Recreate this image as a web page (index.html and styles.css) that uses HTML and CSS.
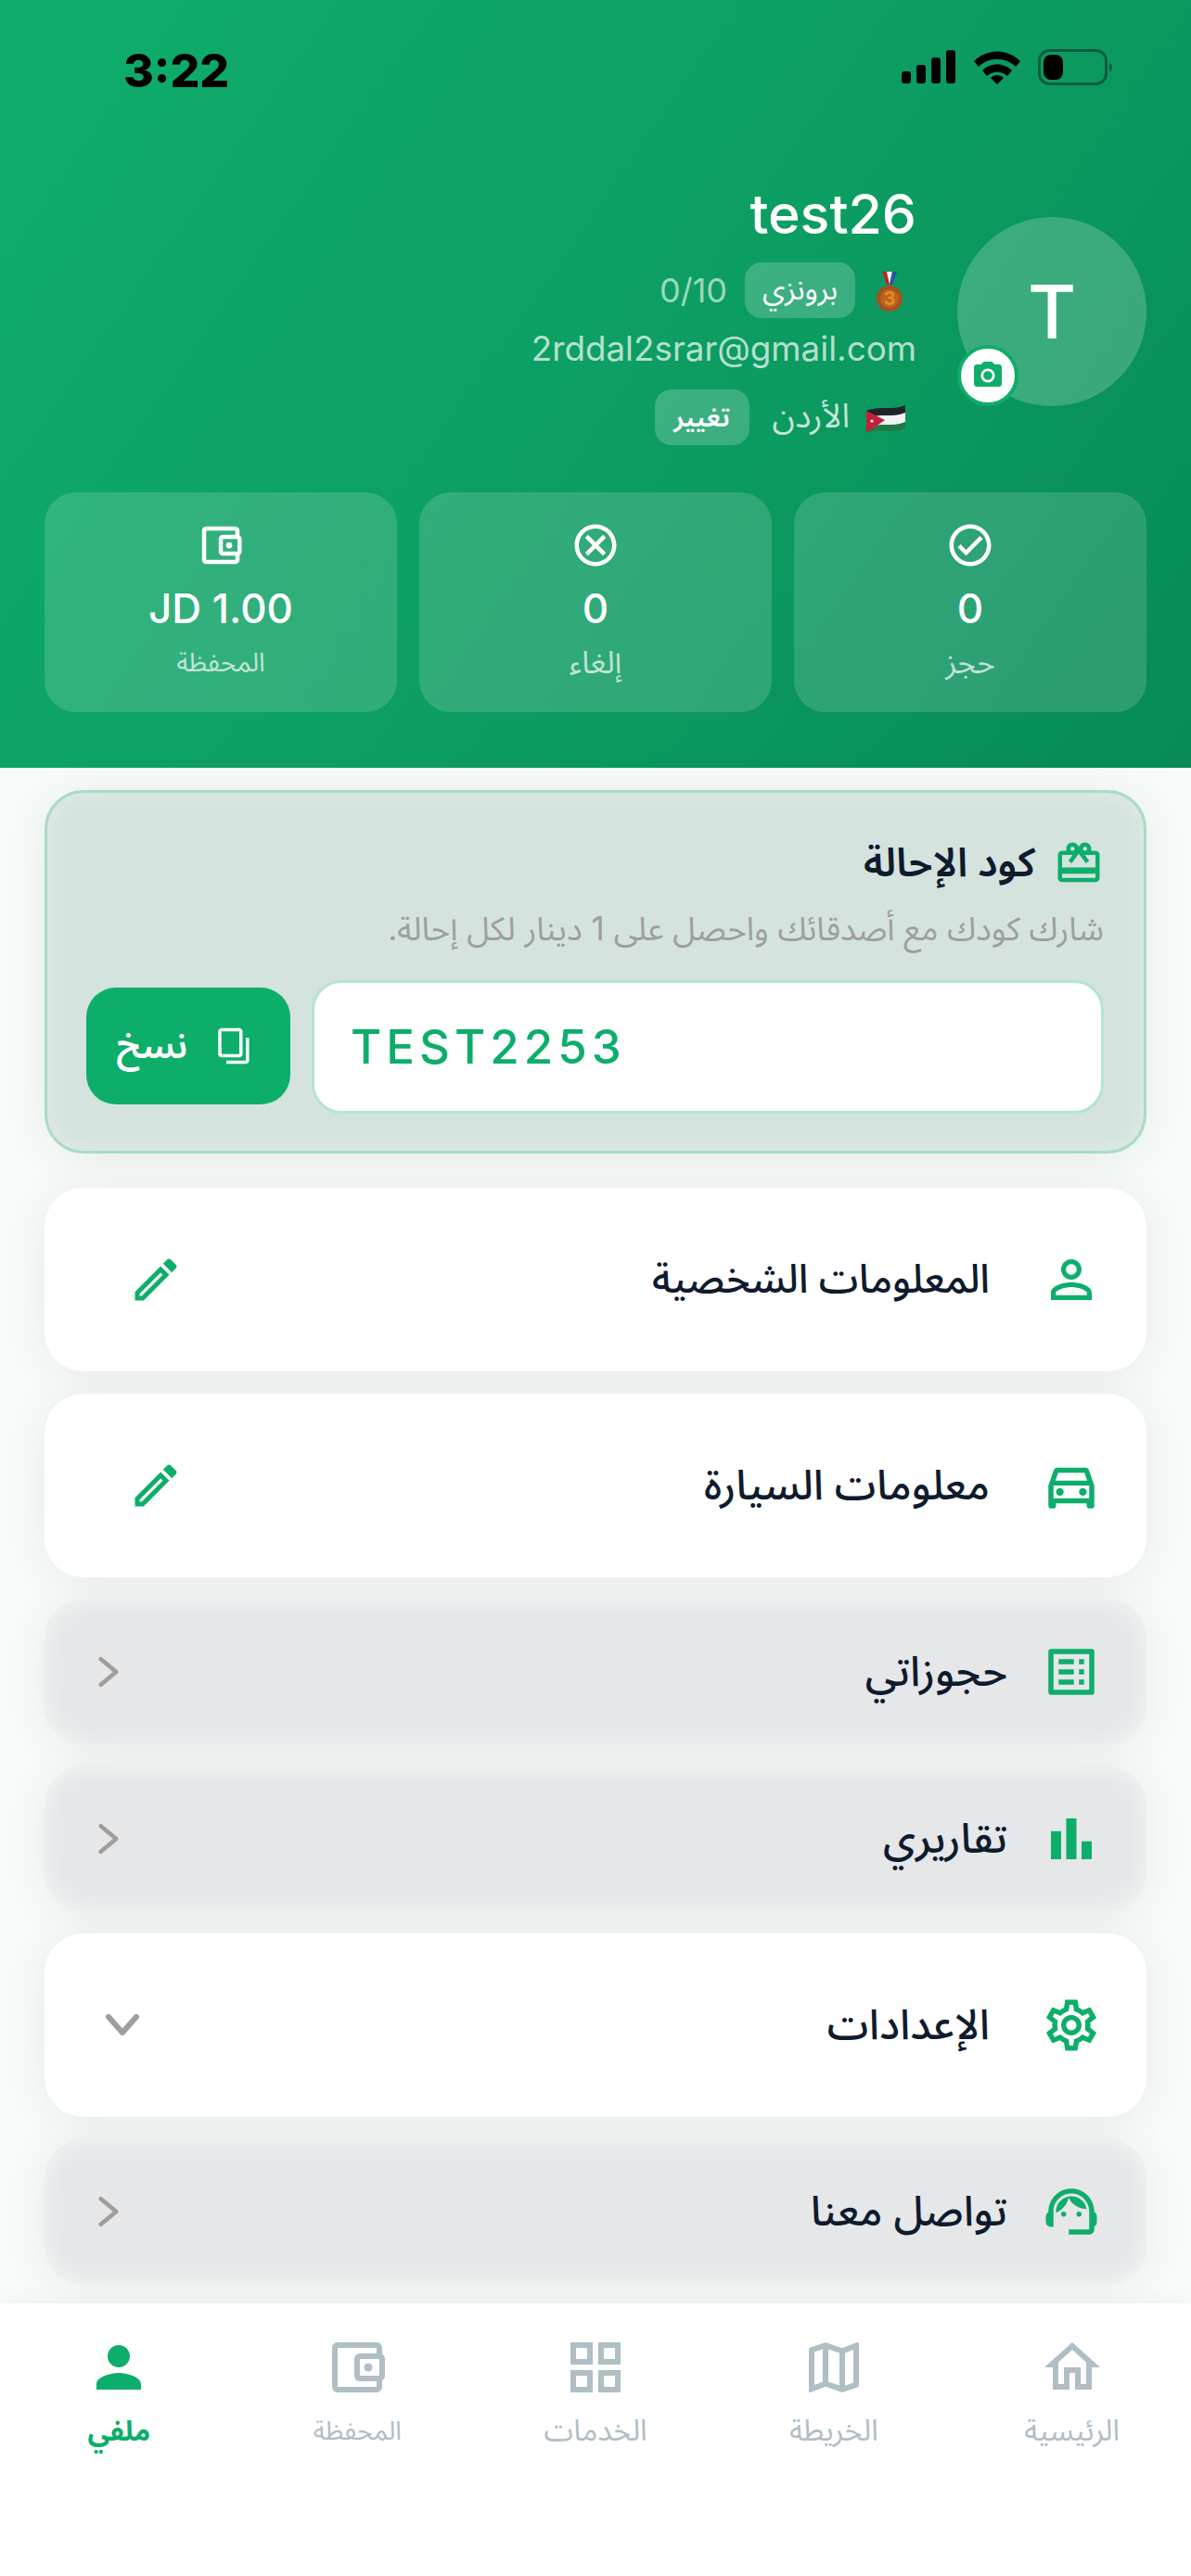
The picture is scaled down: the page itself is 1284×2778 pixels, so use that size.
FILE: index.html
```html
<!DOCTYPE html>
<html lang="ar" dir="rtl">
<head>
    <meta charset="UTF-8">
    <meta name="viewport" content="width=device-width, initial-scale=1.0">
    <title>ملفي</title>
    <link rel="stylesheet" href="styles.css">
</head>
<body>
    <div class="app">
        <div class="scroll">
            <header class="hero">
                <div class="status" dir="ltr">
                    <span class="time">3:22</span>
                    <svg class="status-icons" viewBox="0 0 230 39" width="230" height="39">
                        <rect x="0" y="24" width="10" height="13" rx="3"/>
                        <rect x="16" y="17" width="10" height="20" rx="3"/>
                        <rect x="32" y="9" width="10" height="28" rx="3"/>
                        <rect x="48" y="1" width="10" height="36" rx="3"/>
                        <path d="M78 13 C92 -1 114 -1 128 13 L123 19 C112 8 94 8 83 19Z"/>
                        <path d="M87 23 C96 14 110 14 119 23 L114 29 C107 23 99 23 92 29Z"/>
                        <path d="M96 31 C100 27 106 27 110 31 L103 38Z"/>
                        <rect x="148.5" y="1.5" width="72" height="36" rx="11" fill="none" stroke="#0a5c3e" stroke-width="3"/>
                        <rect x="153" y="6" width="21" height="27" rx="8"/>
                        <path d="M224 15 C228 16 228 23 224 24Z" fill="#0a5c3e"/>
                    </svg>
                </div>

                <div class="profile">
                    <div class="avatar">
                        <span>T</span>
                        <div class="camera">
                            <svg viewBox="0 0 24 24" width="36" height="36"><path d="M12 15.2a3.2 3.2 0 1 0 0-6.4 3.2 3.2 0 0 0 0 6.4z"/><path d="M9 2 7.17 4H4c-1.1 0-2 .9-2 2v12c0 1.1.9 2 2 2h16c1.1 0 2-.9 2-2V6c0-1.1-.9-2-2-2h-3.17L15 2H9zm3 15c-2.76 0-5-2.24-5-5s2.24-5 5-5 5 2.24 5 5-2.24 5-5 5z"/></svg>
                        </div>
                    </div>
                    <div class="info">
                        <div class="name" dir="ltr">test26</div>
                        <div class="level">
                            <svg class="medal" viewBox="0 0 28 44" width="28" height="44">
                                <path d="M6 0h5l3 14h-3z" fill="#c8202f"/>
                                <path d="M11 0h6l-3 14z" fill="#f4f4f4"/>
                                <path d="M17 0h5l-5 14h-3z" fill="#2b4fa8"/>
                                <circle cx="14" cy="29" r="14" fill="#a5521c"/>
                                <circle cx="14" cy="29" r="10" fill="#b9651f"/>
                                <text x="14" y="36" class="medal-num">3</text>
                            </svg>
                            <span class="pill pill-level">برونزي</span>
                            <span class="points" dir="ltr">0/10</span>
                        </div>
                        <div class="email" dir="ltr">2rddal2srar@gmail.com</div>
                        <div class="country">
                            <svg class="flag" viewBox="0 0 42 30" width="42" height="30">
                                <path d="M0 6 C14 0 28 6 42 0 V10 C28 16 14 10 0 16Z" fill="#20242a"/>
                                <path d="M0 14 C14 8 28 14 42 8 V20 C28 26 14 20 0 26Z" fill="#f2f2f2"/>
                                <path d="M0 24 C14 18 28 24 42 18 V25 C28 31 14 24 0 30Z" fill="#1f7a45"/>
                                <path d="M0 6 L20 16 L0 30Z" fill="#c4203a"/>
                                <circle cx="6" cy="17" r="1.6" fill="#fff"/>
                            </svg>
                            <span class="country-name">الأردن</span>
                            <span class="pill pill-change">تغيير</span>
                        </div>
                    </div>
                </div>

                <div class="stats">
                    <div class="stat">
                        <svg viewBox="0 0 24 24" width="54" height="54"><path d="M12 2C6.48 2 2 6.48 2 12s4.48 10 10 10 10-4.48 10-10S17.52 2 12 2zm0 18c-4.41 0-8-3.59-8-8s3.59-8 8-8 8 3.59 8 8-3.59 8-8 8zm4.59-12.42L10 14.17l-2.59-2.58L6 13l4 4 8-8z"/></svg>
                        <div class="stat-value">0</div>
                        <div class="stat-label">حجز</div>
                    </div>
                    <div class="stat">
                        <svg viewBox="0 0 24 24" width="54" height="54"><path d="M12 2C6.47 2 2 6.47 2 12s4.47 10 10 10 10-4.47 10-10S17.53 2 12 2zm0 18c-4.41 0-8-3.59-8-8s3.59-8 8-8 8 3.59 8 8-3.59 8-8 8zm3.59-13L12 10.59 8.41 7 7 8.41 10.59 12 7 15.59 8.41 17 12 13.41 15.59 17 17 15.59 13.41 12 17 8.41z"/></svg>
                        <div class="stat-value">0</div>
                        <div class="stat-label">إلغاء</div>
                    </div>
                    <div class="stat">
                        <svg viewBox="0 0 24 24" width="54" height="54"><path d="M21 7.28V5c0-1.1-.9-2-2-2H5c-1.11 0-2 .9-2 2v14c0 1.1.89 2 2 2h14c1.1 0 2-.9 2-2v-2.28c.59-.35 1-.98 1-1.72V9c0-.74-.41-1.37-1-1.72zM20 9v6h-7V9h7zM5 19V5h14v2h-6c-1.1 0-2 .9-2 2v6c0 1.1.9 2 2 2h6v2H5z"/><circle cx="16" cy="12" r="1.5"/></svg>
                        <div class="stat-value" dir="ltr">JD 1.00</div>
                        <div class="stat-label tight">المحفظة</div>
                    </div>
                </div>
            </header>

            <main class="content">
                <section class="referral">
                    <div class="referral-title">
                        <svg viewBox="0 0 24 24" width="54" height="54"><path d="M20 6h-2.18c.11-.31.18-.65.18-1 0-1.66-1.34-3-3-3-1.05 0-1.96.54-2.5 1.35l-.5.67-.5-.68C10.96 2.54 10.05 2 9 2 7.34 2 6 3.34 6 5c0 .35.07.69.18 1H4c-1.11 0-1.99.89-1.99 2L2 19c0 1.11.89 2 2 2h16c1.11 0 2-.89 2-2V8c0-1.11-.89-2-2-2zm-5-2c.55 0 1 .45 1 1s-.45 1-1 1-1-.45-1-1 .45-1 1-1zM9 4c.55 0 1 .45 1 1s-.45 1-1 1-1-.45-1-1 .45-1 1-1zm11 15H4v-2h16v2zm0-5H4V8h5.08L7 10.83 8.62 12 11 8.76l1-1.36 1 1.36L15.38 12 17 10.83 14.92 8H20v6z"/></svg>
                        <span>كود الإحالة</span>
                    </div>
                    <p class="referral-text">شارك كودك مع أصدقائك واحصل على 1 دينار لكل إحالة.</p>
                    <div class="referral-row">
                        <div class="code" dir="ltr">TEST2253</div>
                        <button class="copy" type="button">
                            <svg class="flip" viewBox="0 0 24 24" width="42" height="42"><path d="M16 1H4c-1.1 0-2 .9-2 2v14h2V3h12V1zm3 4H8c-1.1 0-2 .9-2 2v14c0 1.1.9 2 2 2h11c1.1 0 2-.9 2-2V7c0-1.1-.9-2-2-2zm0 16H8V7h11v14z"/></svg>
                            <span>نسخ</span>
                        </button>
                    </div>
                </section>

                <div class="menu">
                    <div class="row row-open">
                        <svg class="row-icon" viewBox="0 0 24 24"><path d="M12 5.9c1.16 0 2.1.94 2.1 2.1s-.94 2.1-2.1 2.1S9.9 9.16 9.9 8s.94-2.1 2.1-2.1m0 9c2.97 0 6.1 1.46 6.1 2.1v1.1H5.9V17c0-.64 3.13-2.1 6.1-2.1M12 4C9.79 4 8 5.79 8 8s1.79 4 4 4 4-1.79 4-4-1.79-4-4-4zm0 9c-2.67 0-8 1.34-8 4v3h16v-3c0-2.66-5.33-4-8-4z"/></svg>
                        <span class="row-text tight-row">المعلومات الشخصية</span>
                        <svg class="row-edit" viewBox="0 0 24 24"><path d="M14.06 9.02l.92.92L5.92 19H5v-.92l9.06-9.06M17.66 3c-.25 0-.51.1-.7.29l-1.83 1.83 3.75 3.75 1.83-1.83c.39-.39.39-1.02 0-1.41l-2.34-2.34c-.2-.2-.45-.29-.71-.29zm-3.6 3.19L3 17.25V21h3.75L17.81 9.94l-3.75-3.75z"/></svg>
                    </div>
                    <div class="row row-open">
                        <svg class="row-icon" viewBox="0 0 24 24"><path d="M18.92 6.01C18.72 5.42 18.16 5 17.5 5h-11c-.66 0-1.21.42-1.42 1.01L3 12v8c0 .55.45 1 1 1h1c.55 0 1-.45 1-1v-1h12v1c0 .55.45 1 1 1h1c.55 0 1-.45 1-1v-8l-2.08-5.99zM6.85 7h10.29l1.08 3.11H5.77L6.85 7zM19 17H5v-5h14v5z"/><circle cx="7.5" cy="14.5" r="1.5"/><circle cx="16.5" cy="14.5" r="1.5"/></svg>
                        <span class="row-text">معلومات السيارة</span>
                        <svg class="row-edit" viewBox="0 0 24 24"><path d="M14.06 9.02l.92.92L5.92 19H5v-.92l9.06-9.06M17.66 3c-.25 0-.51.1-.7.29l-1.83 1.83 3.75 3.75 1.83-1.83c.39-.39.39-1.02 0-1.41l-2.34-2.34c-.2-.2-.45-.29-.71-.29zm-3.6 3.19L3 17.25V21h3.75L17.81 9.94l-3.75-3.75z"/></svg>
                    </div>
                    <div class="row row-gray">
                        <svg class="row-icon mirror" viewBox="0 0 24 24"><path d="M19 5v14H5V5h14m1.1-2H3.9c-.5 0-.9.4-.9.9v16.2c0 .4.4.9.9.9h16.2c.4 0 .9-.5.9-.9V3.9c0-.5-.5-.9-.9-.9zM11 7h6v2h-6V7zm0 4h6v2h-6v-2zm0 4h6v2h-6zM7 7h2v2H7zm0 4h2v2H7zm0 4h2v2H7z"/></svg>
                        <span class="row-text">حجوزاتي</span>
                        <svg class="chevron" viewBox="0 0 24 36"><path d="M3 3 L21 18 L3 33"/></svg>
                    </div>
                    <div class="row row-gray">
                        <svg class="row-icon" viewBox="0 0 24 24"><path d="M4 9h4v11H4zM16 13h4v7h-4zM10 4h4v16h-4z"/></svg>
                        <span class="row-text">تقاريري</span>
                        <svg class="chevron" viewBox="0 0 24 36"><path d="M3 3 L21 18 L3 33"/></svg>
                    </div>
                    <div class="row row-open row-settings">
                        <svg class="row-icon" viewBox="0 0 24 24"><path d="M19.43 12.98c.04-.32.07-.64.07-.98 0-.34-.03-.66-.07-.98l2.11-1.65c.19-.15.24-.42.12-.64l-2-3.46c-.09-.16-.26-.25-.44-.25-.06 0-.12.01-.17.03l-2.49 1c-.52-.4-1.08-.73-1.69-.98l-.38-2.65C14.46 2.18 14.25 2 14 2h-4c-.25 0-.46.18-.49.42l-.38 2.65c-.61.25-1.17.59-1.69.98l-2.49-1c-.06-.02-.12-.03-.18-.03-.17 0-.34.09-.43.25l-2 3.46c-.13.22-.07.49.12.64l2.11 1.65c-.04.32-.07.65-.07.98 0 .33.03.66.07.98l-2.11 1.65c-.19.15-.24.42-.12.64l2 3.46c.09.16.26.25.44.25.06 0 .12-.01.17-.03l2.49-1c.52.4 1.08.73 1.69.98l.38 2.65c.03.24.24.42.49.42h4c.25 0 .46-.18.49-.42l.38-2.65c.61-.25 1.17-.59 1.69-.98l2.49 1c.06.02.12.03.18.03.17 0 .34-.09.43-.25l2-3.46c.12-.22.07-.49-.12-.64l-2.11-1.65zm-1.98-1.71c.04.31.05.52.05.73 0 .21-.02.43-.05.73l-.14 1.13.89.7 1.08.84-.7 1.21-1.27-.51-1.04-.42-.9.68c-.43.32-.84.56-1.25.73l-1.06.43-.16 1.13-.2 1.35h-1.4l-.19-1.35-.16-1.13-1.06-.43c-.43-.18-.83-.41-1.23-.71l-.91-.7-1.06.43-1.27.51-.7-1.21 1.08-.84.89-.7-.14-1.13c-.03-.31-.05-.54-.05-.74s.02-.43.05-.73l.14-1.13-.89-.7-1.08-.84.7-1.21 1.27.51 1.04.42.9-.68c.43-.32.84-.56 1.25-.73l1.06-.43.16-1.13.2-1.35h1.39l.19 1.35.16 1.13 1.06.43c.43.18.83.41 1.23.71l.91.7 1.06-.43 1.27-.51.7 1.21-1.07.85-.89.7.14 1.13zM12 8c-2.21 0-4 1.79-4 4s1.79 4 4 4 4-1.79 4-4-1.79-4-4-4zm0 6c-1.1 0-2-.9-2-2s.9-2 2-2 2 .9 2 2-.9 2-2 2z"/></svg>
                        <span class="row-text">الإعدادات</span>
                        <svg class="chevron-down" viewBox="0 0 36 24"><path d="M3 3 L18 20 L33 3"/></svg>
                    </div>
                    <div class="row row-gray">
                        <svg class="row-icon" viewBox="0 0 24 24"><path d="M21 12.22C21 6.73 16.74 3 12 3c-4.69 0-9 3.65-9 9.28-.6.34-1 .98-1 1.72v2c0 1.1.9 2 2 2h1v-6.1c0-3.87 3.13-7 7-7s7 3.13 7 7V19h-8v2h8c1.1 0 2-.9 2-2v-1.22c.59-.31 1-.92 1-1.64v-2.3c0-.7-.41-1.31-1-1.62z"/><circle cx="9" cy="13" r="1"/><circle cx="15" cy="13" r="1"/><path d="M18 11.03C17.52 8.18 15.04 6 12.05 6c-3.03 0-6.29 2.51-6.03 6.45 2.47-1.01 4.33-3.21 4.86-5.89 1.31 2.63 4 4.44 7.12 4.47z"/></svg>
                        <span class="row-text">تواصل معنا</span>
                        <svg class="chevron" viewBox="0 0 24 36"><path d="M3 3 L21 18 L3 33"/></svg>
                    </div>
                </div>
            </main>
        </div>

        <nav class="tabbar">
            <a class="tab">
                <svg viewBox="0 0 24 24"><path d="M12 5.69l5 4.5V18h-2v-6H9v6H7v-7.81l5-4.5M12 3 2 12h3v8h6v-6h2v6h6v-8h3L12 3z"/></svg>
                <span>الرئيسية</span>
            </a>
            <a class="tab">
                <svg viewBox="0 0 24 24"><path d="M20.5 3l-.16.03L15 5.1 9 3 3.36 4.9c-.21.07-.36.25-.36.48V20.5c0 .28.22.5.5.5l.16-.03L9 18.9l6 2.1 5.64-1.9c.21-.07.36-.25.36-.48V3.5c0-.28-.22-.5-.5-.5zM10 5.47l4 1.4v11.66l-4-1.4V5.47zm-5 .99l3-1.01v11.7l-3 1.16V6.46zm14 11.08l-3 1.01V6.86l3-1.16v11.84z"/></svg>
                <span>الخريطة</span>
            </a>
            <a class="tab">
                <svg viewBox="0 0 24 24"><path d="M3 3v8h8V3H3zm6 6H5V5h4v4zm-6 4v8h8v-8H3zm6 6H5v-4h4v4zm4-16v8h8V3h-8zm6 6h-4V5h4v4zm-6 4v8h8v-8h-8zm6 6h-4v-4h4v4z"/></svg>
                <span>الخدمات</span>
            </a>
            <a class="tab">
                <svg viewBox="0 0 24 24"><path d="M21 7.28V5c0-1.1-.9-2-2-2H5c-1.11 0-2 .9-2 2v14c0 1.1.89 2 2 2h14c1.1 0 2-.9 2-2v-2.28c.59-.35 1-.98 1-1.72V9c0-.74-.41-1.37-1-1.72zM20 9v6h-7V9h7zM5 19V5h14v2h-6c-1.1 0-2 .9-2 2v6c0 1.1.9 2 2 2h6v2H5z"/><circle cx="16" cy="12" r="1.5"/></svg>
                <span class="tight">المحفظة</span>
            </a>
            <a class="tab tab-active">
                <svg viewBox="0 0 24 24"><path d="M12 12c2.21 0 4-1.79 4-4s-1.79-4-4-4-4 1.79-4 4 1.79 4 4 4zm0 2c-2.67 0-8 1.34-8 4v2h16v-2c0-2.66-5.33-4-8-4z"/></svg>
                <span>ملفي</span>
            </a>
        </nav>
    </div>
</body>
</html>
```

FILE: styles.css
```css
* {
    box-sizing: border-box;
}

body {
    margin: 0;
    font-family: Inter, "Noto Sans Arabic", "Noto Sans", "DejaVu Sans", sans-serif;
    color: #0f1b2d;
    background: #f7fbf9;
}

.app {
    width: 1284px;
    height: 2778px;
    display: flex;
    flex-direction: column;
    overflow: hidden;
}

.scroll {
    flex: 1;
    min-height: 0;
    overflow: hidden;
}

/* Шапка */
.hero {
    height: 828px;
    padding: 0 48px;
    background: linear-gradient(125deg, #0fae6c 0%, #0c9c61 58%, #078a58 100%);
    color: #fff;
}

.status {
    height: 191px;
    padding: 46px 34px 0 85px;
    display: flex;
    justify-content: space-between;
    align-items: flex-start;
    color: #000;
}

.time {
    font-size: 50px;
    line-height: 60px;
    font-weight: 800;
}

.status-icons {
    margin-top: 7px;
    fill: #000;
}

.profile {
    display: flex;
    align-items: center;
    gap: 44px;
}

.avatar {
    position: relative;
    flex: none;
    width: 204px;
    height: 204px;
    border-radius: 50%;
    background: rgba(255, 255, 255, 0.2);
    display: flex;
    align-items: center;
    justify-content: center;
    font-size: 80px;
    font-weight: 500;
}

.camera {
    position: absolute;
    left: 0;
    bottom: 0;
    width: 66px;
    height: 66px;
    border-radius: 50%;
    border: 4px solid #0dae6a;
    background: #fff;
    display: flex;
    align-items: center;
    justify-content: center;
    fill: #0dae6a;
}

.info {
    flex: 1;
    min-width: 0;
}

.name {
    height: 80px;
    line-height: 80px;
    font-size: 59px;
    font-weight: 500;
    text-align: right;
}

.level,
.country {
    height: 60px;
    display: flex;
    align-items: center;
    margin-top: 12px;
}

.medal {
    margin: 4px 15px 0 23px;
}

.medal-num {
    font-size: 20px;
    font-weight: 700;
    text-anchor: middle;
    fill: #e98a24;
}

.pill {
    height: 60px;
    border-radius: 18px;
    background: rgba(255, 255, 255, 0.2);
    display: flex;
    align-items: center;
    justify-content: center;
    font-size: 32px;
}

.pill-level {
    width: 119px;
}

.pill-change {
    width: 102px;
    font-size: 29px;
    font-weight: 600;
}

.points {
    margin-right: 19px;
    font-size: 36px;
    color: rgba(255, 255, 255, 0.6);
}

.email {
    height: 50px;
    margin-top: 8px;
    line-height: 50px;
    font-size: 36.8px;
    text-align: right;
    color: rgba(255, 255, 255, 0.7);
}

.country {
    margin-top: 19px;
}

.flag {
    margin: 4px 12px 0 18px;
}

.country-name {
    margin-left: 25px;
    font-size: 36px;
    color: rgba(255, 255, 255, 0.75);
}

.stats {
    display: grid;
    grid-template-columns: repeat(3, 1fr);
    gap: 24px;
    margin-top: 51px;
}

.stat {
    height: 237px;
    padding-top: 30px;
    border-radius: 34px;
    background: rgba(255, 255, 255, 0.15);
    display: flex;
    flex-direction: column;
    align-items: center;
    fill: #fff;
}

.stat-value {
    margin-top: 11px;
    height: 60px;
    line-height: 60px;
    font-size: 44px;
    font-weight: 500;
}

.stat-label {
    margin-top: 3px;
    height: 50px;
    line-height: 50px;
    font-size: 33px;
    color: rgba(255, 255, 255, 0.7);
}

/* слова с лигатурой "лям-мим" в оригинальном шрифте уже */
.tight {
    font-size: 28px;
}

/* Контент */
.content {
    padding: 24px 48px 0;
}

.referral {
    height: 392px;
    padding: 46px 43px 0 42px;
    border: 3px solid #a9dcc4;
    border-radius: 42px;
    background: #d4e3de;
    box-shadow: 0 4px 50px rgba(0, 40, 30, 0.07), inset 0 0 30px rgba(255, 255, 255, 0.3);
}

.referral-title {
    height: 60px;
    display: flex;
    align-items: center;
    gap: 20px;
    font-size: 43px;
    font-weight: 600;
    fill: #0dae6a;
}

.referral-text {
    margin: 15px 0 0;
    height: 50px;
    line-height: 50px;
    font-size: 35px;
    color: #9e9e9e;
}

.referral-row {
    margin-top: 31px;
    display: flex;
    align-items: center;
    gap: 23px;
}

.code {
    flex: 1;
    height: 144px;
    padding-left: 39px;
    padding-bottom: 2px;
    border: 3px solid #b2e5cf;
    border-radius: 32px;
    background: #fff;
    display: flex;
    align-items: center;
    font-size: 51px;
    font-weight: 500;
    letter-spacing: 5px;
    color: #0dae6a;
}

.copy {
    flex: none;
    width: 220px;
    height: 126px;
    margin-top: -2px;
    padding: 0 8px 0 0;
    border: none;
    border-radius: 32px;
    background: #0dae6a;
    color: #fff;
    fill: #fff;
    font: inherit;
    font-size: 39px;
    font-weight: 600;
    display: flex;
    align-items: center;
    justify-content: center;
    gap: 28px;
}

.flip {
    transform: rotate(180deg);
}

.menu {
    margin-top: 37px;
    display: flex;
    flex-direction: column;
    gap: 24px;
}

.row {
    display: flex;
    align-items: center;
    border-radius: 42px;
    padding-right: 48px;
}

.row-open {
    height: 198px;
    padding-left: 90px;
    background: #fff;
    box-shadow: 0 4px 50px rgba(0, 40, 30, 0.07);
}

.row-settings {
    padding-left: 66px;
}

.row-gray {
    height: 156px;
    padding-left: 58px;
    background: #e5e7e9;
    box-shadow: 0 4px 50px rgba(0, 40, 30, 0.07), inset 0 0 30px rgba(255, 255, 255, 0.6);
}

.row-icon {
    flex: none;
    width: 66px;
    height: 66px;
    fill: #0dae6a;
}

.mirror {
    transform: scaleX(-1);
}

.row-text {
    flex: 1;
    margin-right: 55px;
    font-size: 45px;
    font-weight: 500;
}

.tight-row {
    font-size: 43px;
}

.row-gray .row-text {
    margin-right: 36px;
}

.row-edit {
    flex: none;
    width: 60px;
    height: 60px;
    fill: #0dae6a;
}

.chevron {
    flex: none;
    width: 22px;
    height: 34px;
    fill: none;
    stroke: #9e9e9e;
    stroke-width: 5;
    stroke-linecap: round;
    stroke-linejoin: round;
}

.chevron-down {
    flex: none;
    width: 36px;
    height: 24px;
    fill: none;
    stroke: #9e9e9e;
    stroke-width: 6;
    stroke-linejoin: round;
    stroke-linecap: round;
}

/* Нижнее меню */
.tabbar {
    flex: none;
    height: 294px;
    padding-top: 33px;
    background: #fff;
    box-shadow: 0 -4px 20px rgba(0, 0, 0, 0.04);
    display: grid;
    grid-template-columns: repeat(5, 1fr);
    position: relative;
}

.tab {
    display: flex;
    flex-direction: column;
    align-items: center;
    color: #b0bec5;
    fill: #b0bec5;
    font-size: 32px;
}

.tab svg {
    width: 72px;
    height: 72px;
}

.tab span {
    margin-top: 7px;
    line-height: 50px;
}

.tab .tight {
    font-size: 28px;
}

.tab-active {
    color: #0dae6a;
    fill: #0dae6a;
    font-size: 30px;
    font-weight: 700;
}
```
